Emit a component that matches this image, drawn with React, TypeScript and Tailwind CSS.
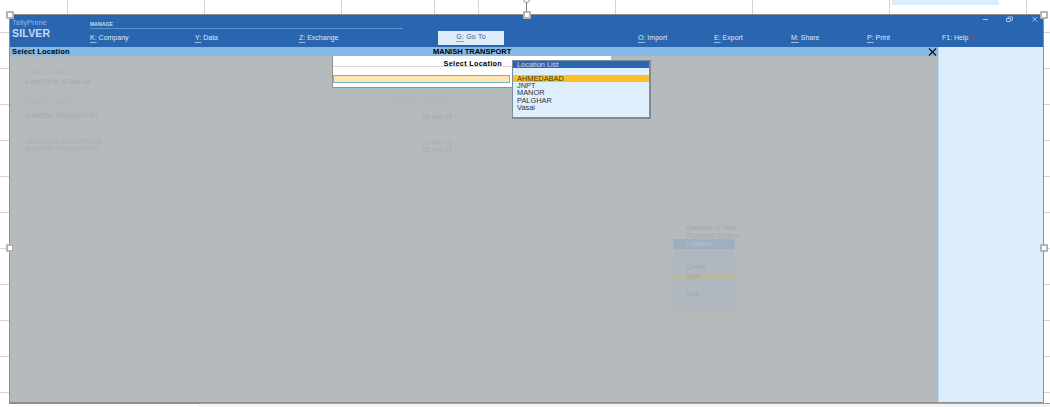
const topTicks = [67, 204, 341, 434, 478, 615, 752, 889, 1026];
const sideTicks = [32, 68, 104, 140, 176, 212, 248, 284, 320, 356, 392];
const handles = [
  [10, 15],
  [527, 15],
  [1044, 15],
  [10, 248],
  [1044, 248],
];

const menuLeft = [
  { key: "K", label: "Company", w: "w-[105px]" },
  { key: "Y", label: "Data", w: "w-[104px]" },
  { key: "Z", label: "Exchange", w: "w-[139px]" },
];

const menuRight = [
  { key: "O", label: "Import", w: "w-[76px]" },
  { key: "E", label: "Export", w: "w-[77px]" },
  { key: "M", label: "Share", w: "w-[76px]" },
  { key: "P", label: "Print", w: "w-[75px]" },
];

const locations = ["JNPT", "MANOR", "PALGHAR", "Vasai"];

function MenuItem({ k, label, className }: { k: string; label: string; className: string }) {
  return (
    <div className={`pb-[2px] text-[7px] leading-[9px] text-[#dbe8f7] ${className}`}>
      <span className="underline decoration-[#9fc1e8] underline-offset-2">{k}:</span> {label}
    </div>
  );
}

function Header() {
  return (
    <header className="flex h-[32px] bg-[#2a66b0]">
      <div className="flex w-[80px] flex-col pl-[2px] pt-[3px]">
        <span className="text-[7.5px] leading-[10px] text-[#8fb6e3]">TallyPrime</span>
        <span className="text-[10.5px] font-bold leading-[11px] tracking-[0.2px] text-[#c7daf0]">SILVER</span>
      </div>
      <div className="flex flex-1 flex-col">
        <div className="flex h-[16px]">
          <div className="mt-[4px] h-[10px] w-[313px] border-b border-[#5d8fcc] text-[5.2px] font-bold leading-[10px] text-[#c7daf0]">
            MANAGE
          </div>
          <div className="flex flex-1 justify-end pr-[5px] text-[#a9c6ea]">
            <svg width="60" height="8" viewBox="0 0 60 8" fill="none" stroke="currentColor" strokeWidth="1">
              <path d="M5 4.5h5" />
              <path d="M28.5 3.5h4v3h-4zM30 3.5V2h4.5v3h-2" />
              <path d="M54.5 2l4.5 4.5M59 2l-4.5 4.5" />
            </svg>
          </div>
        </div>
        <div className="flex items-center">
          {menuLeft.map((m) => (
            <MenuItem key={m.key} k={m.key} label={m.label} className={m.w} />
          ))}
          <div className="flex h-[14px] w-[66px] items-center justify-center bg-[#deedfb] pb-[1px] text-[7px] tracking-[0.2px] text-[#3d5a80]">
            <span className="underline decoration-[#7fa5d6] underline-offset-2">G:</span>&nbsp;Go To
          </div>
          <div className="w-[134px]" />
          {menuRight.map((m) => (
            <MenuItem key={m.key} k={m.key} label={m.label} className={m.w} />
          ))}
          <div className="flex items-center gap-[3px] pb-[2px] text-[7px] leading-[9px] text-[#dbe8f7]">
            F1: Help <span className="h-[2.5px] w-[2.5px] rounded-full bg-[#ff1a1a]" />
          </div>
        </div>
      </div>
    </header>
  );
}

function CompanyInfo() {
  return (
    <div className="flex flex-col pt-[14px] text-[#a9adb1]">
      <div className="pl-[15px]">
        <div className="text-[5.4px] leading-[6px] text-[#abb2b9]">CURRENT PERIOD</div>
        <div className="mt-[2px] text-[6.4px] font-bold leading-[8px]">1-Apr-25 to 31-Mar-26</div>
      </div>
      <div className="mt-[11px] flex h-[9px] w-[462px] items-center justify-between border-y border-[#aeb6ba] pl-[15px] pr-[20px] text-[5.5px] leading-[6px] text-[#abb2b9]">
        <span>NAME OF COMPANY</span>
        <span>DATE OF LAST ENTRY</span>
      </div>
      <div className="mt-[6px] flex w-[462px] justify-between pl-[15px] pr-[20px] text-[7.1px] font-bold leading-[9px]">
        <span>MANISH TRANSPORT</span>
        <span className="text-[6.6px]">28-Apr-23</span>
      </div>
      <div className="mt-[18px] flex w-[462px] justify-between pl-[15px] pr-[20px] text-[7.1px] leading-[7px]">
        <span>GLOBO IT SOLUTIONS</span>
        <span className="text-[6.8px]">11-Apr-25</span>
      </div>
      <div className="flex w-[462px] justify-between pl-[15px] pr-[20px] text-[7.1px] leading-[7px]">
        <span>MANISH TRANSPORT</span>
        <span className="text-[6.8px]">28-Apr-23</span>
      </div>
    </div>
  );
}

function Gateway() {
  return (
    <div className="absolute left-[663px] top-[168px] w-[62px] text-[6.8px] text-[#a4a8ac]">
      <div className="whitespace-nowrap pl-[13px] italic leading-[7.5px]">
        Gateway of Tally
        <br />
        Transport System
      </div>
      <div className="h-[73px] bg-[#b0b7bf]">
        <div className="h-[10px] bg-[#a0aebf] pl-[13px] leading-[10px] text-[#b9c2cc]">Location</div>
        <div className="pl-[13px] pt-[14px] leading-[8px]">Create</div>
        <div className="mt-[2px] h-[7px] bg-[#b8b9a4] pl-[13px] leading-[7px]">Alter</div>
        <div className="pl-[13px] pt-[10px] leading-[8px]">Quit</div>
      </div>
    </div>
  );
}

function LocationDialog() {
  return (
    <>
      <div className="absolute left-[322px] top-[0px] h-[31px] w-[279px] border-l border-[#8d9297] bg-white shadow-[0_1px_0_#8d9297]">
        <div className="h-[11px] w-[180px] border-b border-[#d8d8d8] pr-[11px] pt-[3px] text-right text-[7.3px] font-bold leading-[10px] tracking-[0.3px] text-black">
          Select Location
        </div>
        <div className="mt-[8px] h-[8px] w-[177px] border border-[#6fb5c9] bg-[#ffe6b0]" />
      </div>
      <div className="absolute left-[502px] top-[4px] h-[59px] w-[139px] border border-b-2 border-r-2 border-[#7d8b99] bg-[#e0effc] text-[7.4px] leading-[7.3px] text-[#333333]">
        <div className="h-[7px] bg-[#2a66b0] pl-[4px] text-[#c9def5]">Location List</div>
        <div className="mt-[7px] h-[7px] bg-[#fcbf27] pl-[4px] text-[#3a3a1a]">AHMEDABAD</div>
        {locations.map((l) => (
          <div key={l} className="pl-[4px]">
            {l}
          </div>
        ))}
      </div>
    </>
  );
}

export default function App() {
  return (
    <div className="relative h-[407px] w-[1050px] overflow-hidden bg-white font-['Liberation_Sans',Arial,sans-serif]">
      {topTicks.map((x) => (
        <div key={x} className="absolute top-0 h-[14px] w-px bg-[#d4d4d4]" style={{ left: x }} />
      ))}
      {sideTicks.map((y) => (
        <div key={y} className="absolute left-0 h-px w-[9px] bg-[#d4d4d4]" style={{ top: y }} />
      ))}
      {sideTicks.map((y) => (
        <div key={y} className="absolute left-[1044px] h-px w-[6px] bg-[#d4d4d4]" style={{ top: y }} />
      ))}
      <div className="absolute left-[892px] top-0 h-[5px] w-[107px] bg-[#dceefc]" />
      <div className="absolute bottom-0 left-[198px] h-[4px] w-[852px] border-t border-[#a0a0a0] bg-[#f4f4f4]" />

      <div className="pl-[9px] pt-[14px]">
        <div className="flex h-[390px] w-[1035px] flex-col border border-b-2 border-[#8f8f8f]">
          <Header />
          <div className="flex min-h-0 flex-1">
            <div className="flex w-[928px] flex-col">
              <div className="flex h-[9px] items-center justify-between bg-[#85bae6] pl-[2px] pr-[1px] text-[7.5px] font-bold leading-[9px] text-black">
                <span className="w-[421px] tracking-[0.15px]">Select Location</span>
                <span className="flex-1">MANISH TRANSPORT</span>
                <svg width="9" height="8" viewBox="0 0 9 8" fill="none" stroke="#111" strokeWidth="1.2">
                  <path d="M1 .5l7 7M8 .5l-7 7" />
                </svg>
              </div>
              <div className="relative flex-1 bg-[#b5babd]">
                <div className="absolute left-[461px] top-0 h-full w-px bg-[#b1b6b9]" />
                <CompanyInfo />
                <Gateway />
                <LocationDialog />
              </div>
            </div>
            <div className="flex-1 border-l border-[#b5d8f4] bg-[#dceefc]" />
          </div>
        </div>
      </div>

      <div className="absolute left-[526px] top-0 h-[14px] w-px bg-[#777777]" />
      <div className="absolute left-[523px] top-[-4px] h-[7px] w-[7px] rounded-full border border-[#8a8a8a] bg-white" />
      {handles.map(([x, y]) => (
        <div
          key={`${x}-${y}`}
          className="absolute h-[8px] w-[8px] rounded-[1px] border-2 border-[#b4b4b4] bg-white"
          style={{ left: x - 4, top: y - 4 }}
        />
      ))}
    </div>
  );
}
